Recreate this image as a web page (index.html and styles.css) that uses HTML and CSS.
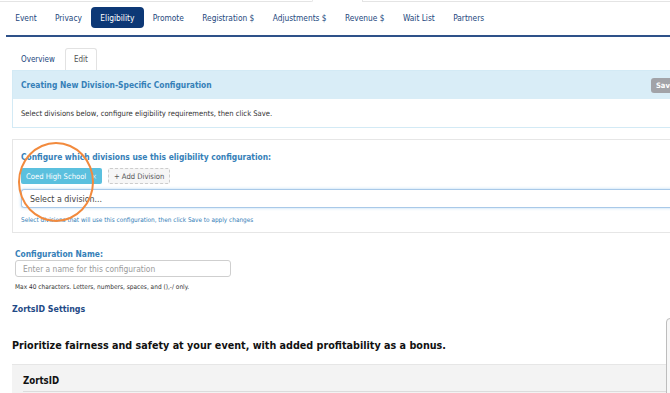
FILE: index.html
```html
<!DOCTYPE html>
<html>
<head>
	<title>Eligibility - Division Configuration</title>
	<link rel="stylesheet" href="styles.css">
</head>
<body>
	<div class="top-strip">
		<span class="strip-left"></span>
		<span class="strip-right"></span>
	</div>
	<nav class="main-tabs">
		<a>Event</a>
		<a>Privacy</a>
		<a class="active">Eligibility</a>
		<a>Promote</a>
		<a>Registration $</a>
		<a>Adjustments $</a>
		<a>Revenue $</a>
		<a>Wait List</a>
		<a>Partners</a>
	</nav>
	<div class="page">
		<div class="sub-tabs">
			<span class="sub-tab">Overview</span>
			<span class="sub-tab current">Edit</span>
		</div>
		<div class="info-panel">
			<div class="info-head">
				<span class="info-title">Creating New Division-Specific Configuration</span>
				<button class="save-btn">Save</button>
			</div>
			<div class="info-body">Select divisions below, configure eligibility requirements, then click Save.</div>
		</div>
		<div class="division-box">
			<div class="box-title">Configure which divisions use this eligibility configuration:</div>
			<div class="tag-row">
				<span class="tag">Coed High School <span class="tag-x">×</span></span>
				<button class="add-btn">+ Add Division</button>
			</div>
			<div class="select-box">Select a division...</div>
			<div class="hint">Select divisions that will use this configuration, then click Save to apply changes</div>
			<div class="highlight-ring"></div>
		</div>
		<div class="name-field">
			<label for="configName">Configuration Name:</label>
			<input type="text" id="configName" placeholder="Enter a name for this configuration"/>
			<div class="small-note">Max 40 characters. Letters, numbers, spaces, and (),-/ only.</div>
		</div>
		<h3 class="section-head">ZortsID Settings</h3>
		<p class="pitch">Prioritize fairness and safety at your event, with added profitability as a bonus.</p>
		<div class="zid-box">
			<div class="zid-head">ZortsID</div>
		</div>
	</div>
	<div class="scroll-nub"></div>
</body>
</html>
```

FILE: styles.css
```css
		html, body {
			margin: 0;
			overflow: hidden;
		}
		body {
			font-family: "DejaVu Sans Condensed", "DejaVu Sans", sans-serif;
			color: #333333;
			background-color: #ffffff;
			width: 670px;
			height: 393px;
			position: relative;
		}
		.top-strip {
			display: flex;
			height: 2px;
		}
		.strip-left {
			width: 312px;
			border-bottom: 1px solid #e4e4e4;
			border-right: 1px solid #e4e4e4;
			border-bottom-right-radius: 2px;
		}
		.strip-right {
			flex: 1;
			margin-left: 49px;
			border-bottom: 1px solid #e4e4e4;
			border-left: 1px solid #e4e4e4;
		}
		.main-tabs {
			display: flex;
			margin-left: 6px;
			padding: 5px 0 7px 0;
			border-bottom: 2px solid #2e5189;
		}
		.main-tabs a {
			display: flex;
			align-items: center;
			height: 21px;
			padding: 0 9.2px;
			font-size: 8.3px;
			color: #23477d;
			border-radius: 4px;
		}
		.main-tabs a.active {
			background-color: #0d3876;
			color: #ffffff;
		}
		.page {
			width: 700px;
			padding-left: 12px;
		}
		.sub-tabs {
			display: flex;
			margin-top: 11px;
			height: 22px;
		}
		.sub-tab {
			display: flex;
			align-items: center;
			padding: 0 9px;
			font-size: 8px;
			color: #23477d;
		}
		.sub-tab.current {
			color: #555555;
			border: 1px solid #e2e2e2;
			border-bottom: none;
			border-radius: 3px 3px 0 0;
			background: #ffffff;
			margin-left: 1px;
			padding: 0 8px;
		}
		.info-panel {
			border: 1px solid #d3eaf5;
		}
		.info-head {
			display: flex;
			align-items: center;
			justify-content: space-between;
			height: 28px;
			padding: 0 10px 0 8px;
			background-color: #d9edf7;
		}
		.info-title {
			font-weight: bold;
			font-size: 8.4px;
			color: #3580b8;
		}
		.save-btn {
			width: 50px;
			height: 15px;
			border: none;
			border-radius: 3px;
			background-color: #a2a3a8;
			color: #ffffff;
			font-family: inherit;
			font-weight: bold;
			font-size: 7.5px;
			text-align: left;
			padding-left: 5px;
		}
		.info-body {
			display: flex;
			align-items: center;
			height: 28px;
			padding-left: 8px;
			font-size: 7.6px;
			color: #333333;
		}
		.division-box {
			position: relative;
			margin-top: 11px;
			border: 1px solid #e6e6e6;
			padding: 12px 0 7px 8px;
		}
		.box-title {
			font-weight: bold;
			font-size: 8.4px;
			line-height: 10px;
			color: #3580b8;
		}
		.tag-row {
			display: flex;
			gap: 6px;
			margin-top: 6px;
			height: 16px;
		}
		.tag {
			display: flex;
			align-items: center;
			padding: 0 5px;
			background-color: #5bc0de;
			color: #ffffff;
			font-size: 7.6px;
			border-radius: 2px;
		}
		.tag-x {
			margin-left: 5px;
			color: #d6f1f9;
		}
		.add-btn {
			display: flex;
			align-items: center;
			padding: 0 5px;
			background-color: #f6f6f6;
			border: 1px dashed #cccccc;
			border-radius: 2px;
			color: #555555;
			font-family: inherit;
			font-size: 7.6px;
		}
		.select-box {
			display: flex;
			align-items: center;
			margin-top: 5px;
			height: 17px;
			padding-left: 8px;
			border: 1px solid #a9c9e8;
			border-right: none;
			border-radius: 3px 0 0 3px;
			box-shadow: 0 0 3px rgba(102, 175, 233, 0.5);
			font-size: 8.8px;
			color: #444444;
		}
		.hint {
			margin-top: 7px;
			line-height: 10px;
			font-size: 6.4px;
			color: #3580b8;
		}
		.highlight-ring {
			position: absolute;
			left: 5px;
			top: 2px;
			width: 72px;
			height: 76px;
			border: 2px solid #f28a3d;
			border-radius: 50%;
		}
		.name-field {
			margin-left: 3px;
			margin-top: 16px;
		}
		.name-field label {
			display: block;
			line-height: 10px;
			font-weight: bold;
			font-size: 8.4px;
			color: #3580b8;
		}
		.name-field input {
			display: block;
			box-sizing: border-box;
			width: 216px;
			height: 17px;
			margin-top: 1px;
			padding: 0 7px;
			border: 1px solid #cfcfcf;
			border-radius: 3px;
			font-family: inherit;
			font-size: 8.4px;
		}
		.name-field input::placeholder {
			color: #9a9a9a;
		}
		.small-note {
			margin-top: 6px;
			line-height: 8px;
			font-size: 6.5px;
			color: #333333;
		}
		.section-head {
			margin: 12px 0 0 0;
			line-height: 12px;
			font-size: 8.8px;
			color: #1f4a86;
		}
		.pitch {
			margin: 24px 0 0 0;
			line-height: 14px;
			font-weight: bold;
			font-size: 10.7px;
			color: #111111;
		}
		.zid-box {
			margin-top: 11px;
			height: 40px;
			background-color: #f3f3f3;
			border-top: 1px solid #e6e6e6;
		}
		.zid-head {
			margin-left: 11px;
			padding-top: 10px;
			padding-bottom: 4px;
			line-height: 12px;
			font-weight: bold;
			font-size: 9.6px;
			color: #111111;
			border-bottom: 1px solid #dcdcdc;
		}
		.scroll-nub {
			position: absolute;
			right: -4px;
			top: 318px;
			width: 6px;
			height: 80px;
			border: 1px solid #bdbdbd;
			border-radius: 4px;
			background: #f7f7f7;
		}
```
